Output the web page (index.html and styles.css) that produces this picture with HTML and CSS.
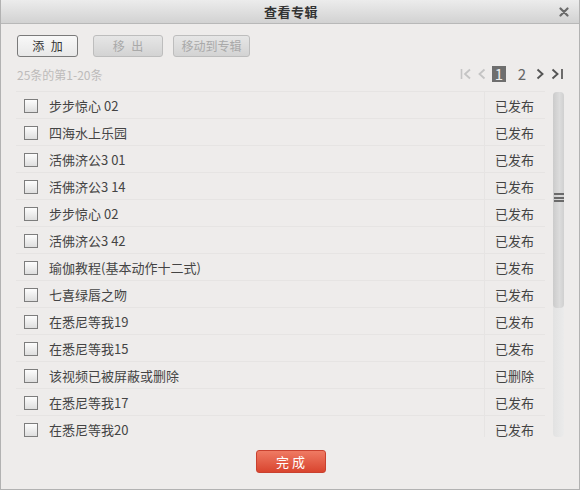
FILE: index.html
```html
<!DOCTYPE html>
<html>
<head>
<meta charset="utf-8">
<link rel="stylesheet" href="styles.css">
</head>
<body>
<div class="dialog">
  <div class="titlebar">
    <span class="title">查看专辑</span>
    <span class="close">
      <svg width="10" height="10" viewBox="0 0 10 10"><path d="M1.5 1.5 L8.5 8.5 M8.5 1.5 L1.5 8.5" stroke="#6a6a6a" stroke-width="2.2" stroke-linecap="round"/></svg>
    </span>
  </div>
  <div class="toolbar">
    <button class="btn btn-add">添 加</button>
    <button class="btn btn-dis btn-out">移 出</button>
    <button class="btn btn-dis btn-move">移动到专辑</button>
  </div>
  <div class="inforow">
    <span class="count">25条的第1-20条</span>
    <div class="pager">
      <svg class="pg" width="13" height="12" viewBox="0 0 13 12"><path d="M1.5 1 V11" stroke="#c4c4c4" stroke-width="1.6"/><path d="M10 1.5 L5 6 L10 10.5" fill="none" stroke="#c4c4c4" stroke-width="1.8"/></svg>
      <svg class="pg" width="8" height="12" viewBox="0 0 8 12"><path d="M6.5 1.5 L1.5 6 L6.5 10.5" fill="none" stroke="#c4c4c4" stroke-width="1.8"/></svg>
      <span class="page cur">1</span>
      <span class="page">2</span>
      <svg class="pg" width="8" height="12" viewBox="0 0 8 12"><path d="M1.5 1.5 L6.5 6 L1.5 10.5" fill="none" stroke="#555" stroke-width="1.9"/></svg>
      <svg class="pg" width="13" height="12" viewBox="0 0 13 12"><path d="M1.5 1.5 L6.5 6 L1.5 10.5" fill="none" stroke="#555" stroke-width="1.9"/><path d="M11 1 V11" stroke="#555" stroke-width="1.7"/></svg>
    </div>
  </div>
  <div class="listwrap">
    <div class="list">
      <div class="row"><span class="cb"></span><span class="name">步步惊心 02</span><span class="status">已发布</span></div>
      <div class="row"><span class="cb"></span><span class="name">四海水上乐园</span><span class="status">已发布</span></div>
      <div class="row"><span class="cb"></span><span class="name">活佛济公3 01</span><span class="status">已发布</span></div>
      <div class="row"><span class="cb"></span><span class="name">活佛济公3 14</span><span class="status">已发布</span></div>
      <div class="row"><span class="cb"></span><span class="name">步步惊心 02</span><span class="status">已发布</span></div>
      <div class="row"><span class="cb"></span><span class="name">活佛济公3 42</span><span class="status">已发布</span></div>
      <div class="row"><span class="cb"></span><span class="name">瑜伽教程(基本动作十二式)</span><span class="status">已发布</span></div>
      <div class="row"><span class="cb"></span><span class="name">七喜绿唇之吻</span><span class="status">已发布</span></div>
      <div class="row"><span class="cb"></span><span class="name">在悉尼等我19</span><span class="status">已发布</span></div>
      <div class="row"><span class="cb"></span><span class="name">在悉尼等我15</span><span class="status">已发布</span></div>
      <div class="row"><span class="cb"></span><span class="name">该视频已被屏蔽或删除</span><span class="status">已删除</span></div>
      <div class="row"><span class="cb"></span><span class="name">在悉尼等我17</span><span class="status">已发布</span></div>
      <div class="row"><span class="cb"></span><span class="name">在悉尼等我20</span><span class="status">已发布</span></div>
    </div>
    <div class="scrollbar">
      <div class="thumb"><span class="grip"></span></div>
    </div>
  </div>
  <div class="footer">
    <button class="btn-done">完 成</button>
  </div>
</div>
</body>
</html>
```
FILE: styles.css
```css
html, body {
  margin: 0;
  padding: 0;
  background: #ffffff;
}
body {
  font-family: "Noto Sans CJK SC", "DejaVu Sans", sans-serif;
  font-size: 13px;
  color: #444;
}
.dialog {
  box-sizing: border-box;
  width: 580px;
  height: 490px;
  background: #eeeceb;
  border: 1px solid #b2b2b2;
  border-top: none;
  display: flex;
  flex-direction: column;
}
.titlebar {
  height: 24px;
  box-sizing: border-box;
  background: linear-gradient(#ececec, #d2d2d2);
  border-bottom: 1px solid #b8b8b8;
  display: flex;
  align-items: center;
  justify-content: center;
  position: relative;
}
.title {
  font-size: 13px;
  font-weight: bold;
  color: #333;
  letter-spacing: 0.5px;
  margin-left: 2px;
}
.close {
  position: absolute;
  right: 10px;
  top: 7px;
  width: 10px;
  height: 10px;
  display: block;
  line-height: 0;
}
.toolbar {
  display: flex;
  padding: 11px 0 0 16px;
  height: 22px;
}
.btn {
  box-sizing: border-box;
  height: 22px;
  padding: 0;
  font-family: inherit;
  font-size: 12px;
  border-radius: 3px;
  line-height: 20px;
}
.btn-add {
  width: 61px;
  border: 1px solid #7a7a7a;
  background: linear-gradient(#f8f8f8, #e8e8e8);
  color: #333;
  letter-spacing: 2px;
  padding-left: 2px;
}
.btn-dis {
  border: 1px solid #bdbdbd;
  background: linear-gradient(#e6e6e6, #d3d3d3);
  color: #a9a9a9;
}
.btn-out {
  width: 70px;
  margin-left: 15px;
  letter-spacing: 2px;
  padding-left: 2px;
}
.btn-move {
  width: 77px;
  margin-left: 10px;
}
.inforow {
  display: flex;
  align-items: center;
  justify-content: space-between;
  height: 16px;
  margin-top: 9px;
  padding: 0 15px 0 16px;
}
.count {
  font-size: 12px;
  color: #bdbbba;
}
.pager {
  display: flex;
  align-items: center;
}
.pg {
  display: block;
}
.pager .pg:nth-child(2) {
  margin-left: 5px;
}
.page {
  font-size: 15px;
  color: #666;
  line-height: 16px;
  height: 16px;
  width: 14px;
  text-align: center;
  margin-left: 6px;
}
.page.cur {
  background: #6e6e6e;
  color: #eee;
}
.page + .page {
  margin-left: 9px;
  margin-right: 7px;
}
.pager .pg:last-child {
  margin-left: 7px;
}
.listwrap {
  display: flex;
  margin-top: 9px;
  height: 346px;
}
.list {
  width: 529px;
  margin-left: 15px;
  overflow: hidden;
  height: 346px;
}
.row {
  box-sizing: border-box;
  height: 27px;
  border-top: 1px solid #e6e4e3;
  display: flex;
  align-items: center;
}
.cb {
  box-sizing: border-box;
  width: 14px;
  height: 14px;
  border: 1px solid #7d7d7d;
  background: linear-gradient(#fdfdfd, #dedede);
  margin-left: 8px;
  margin-top: 1px;
}
.name {
  margin-left: 11px;
  flex: 1;
  font-size: 13px;
  color: #444;
}
.status {
  width: 61px;
  box-sizing: border-box;
  height: 26px;
  line-height: 27px;
  border-left: 1px solid #e6e4e3;
  padding-left: 10px;
  font-size: 13px;
  color: #444;
}
.scrollbar {
  width: 11px;
  margin-left: 8px;
  margin-top: 1px;
  height: 345px;
  background: linear-gradient(90deg, #e2e2e2, #ebebeb);
  border-radius: 4px;
}
.thumb {
  height: 216px;
  border-radius: 4px;
  background: linear-gradient(90deg, #cbcbcb, #dcdcdc 60%, #d0d0d0);
  display: flex;
  align-items: flex-start;
  justify-content: center;
}
.grip {
  display: block;
  width: 10px;
  height: 9px;
  margin-top: 101px;
  background: repeating-linear-gradient(#6a6a6a 0 2px, transparent 2px 3.5px);
}
.footer {
  display: flex;
  justify-content: center;
  padding-top: 13px;
  padding-left: 1px;
}
.btn-done {
  box-sizing: border-box;
  width: 70px;
  height: 23px;
  border: 1px solid #c9412f;
  border-radius: 3px;
  background: linear-gradient(#ef7a63, #d9452f);
  color: #fff;
  font-family: inherit;
  font-size: 13px;
  padding: 0;
  line-height: 21px;
}
```
